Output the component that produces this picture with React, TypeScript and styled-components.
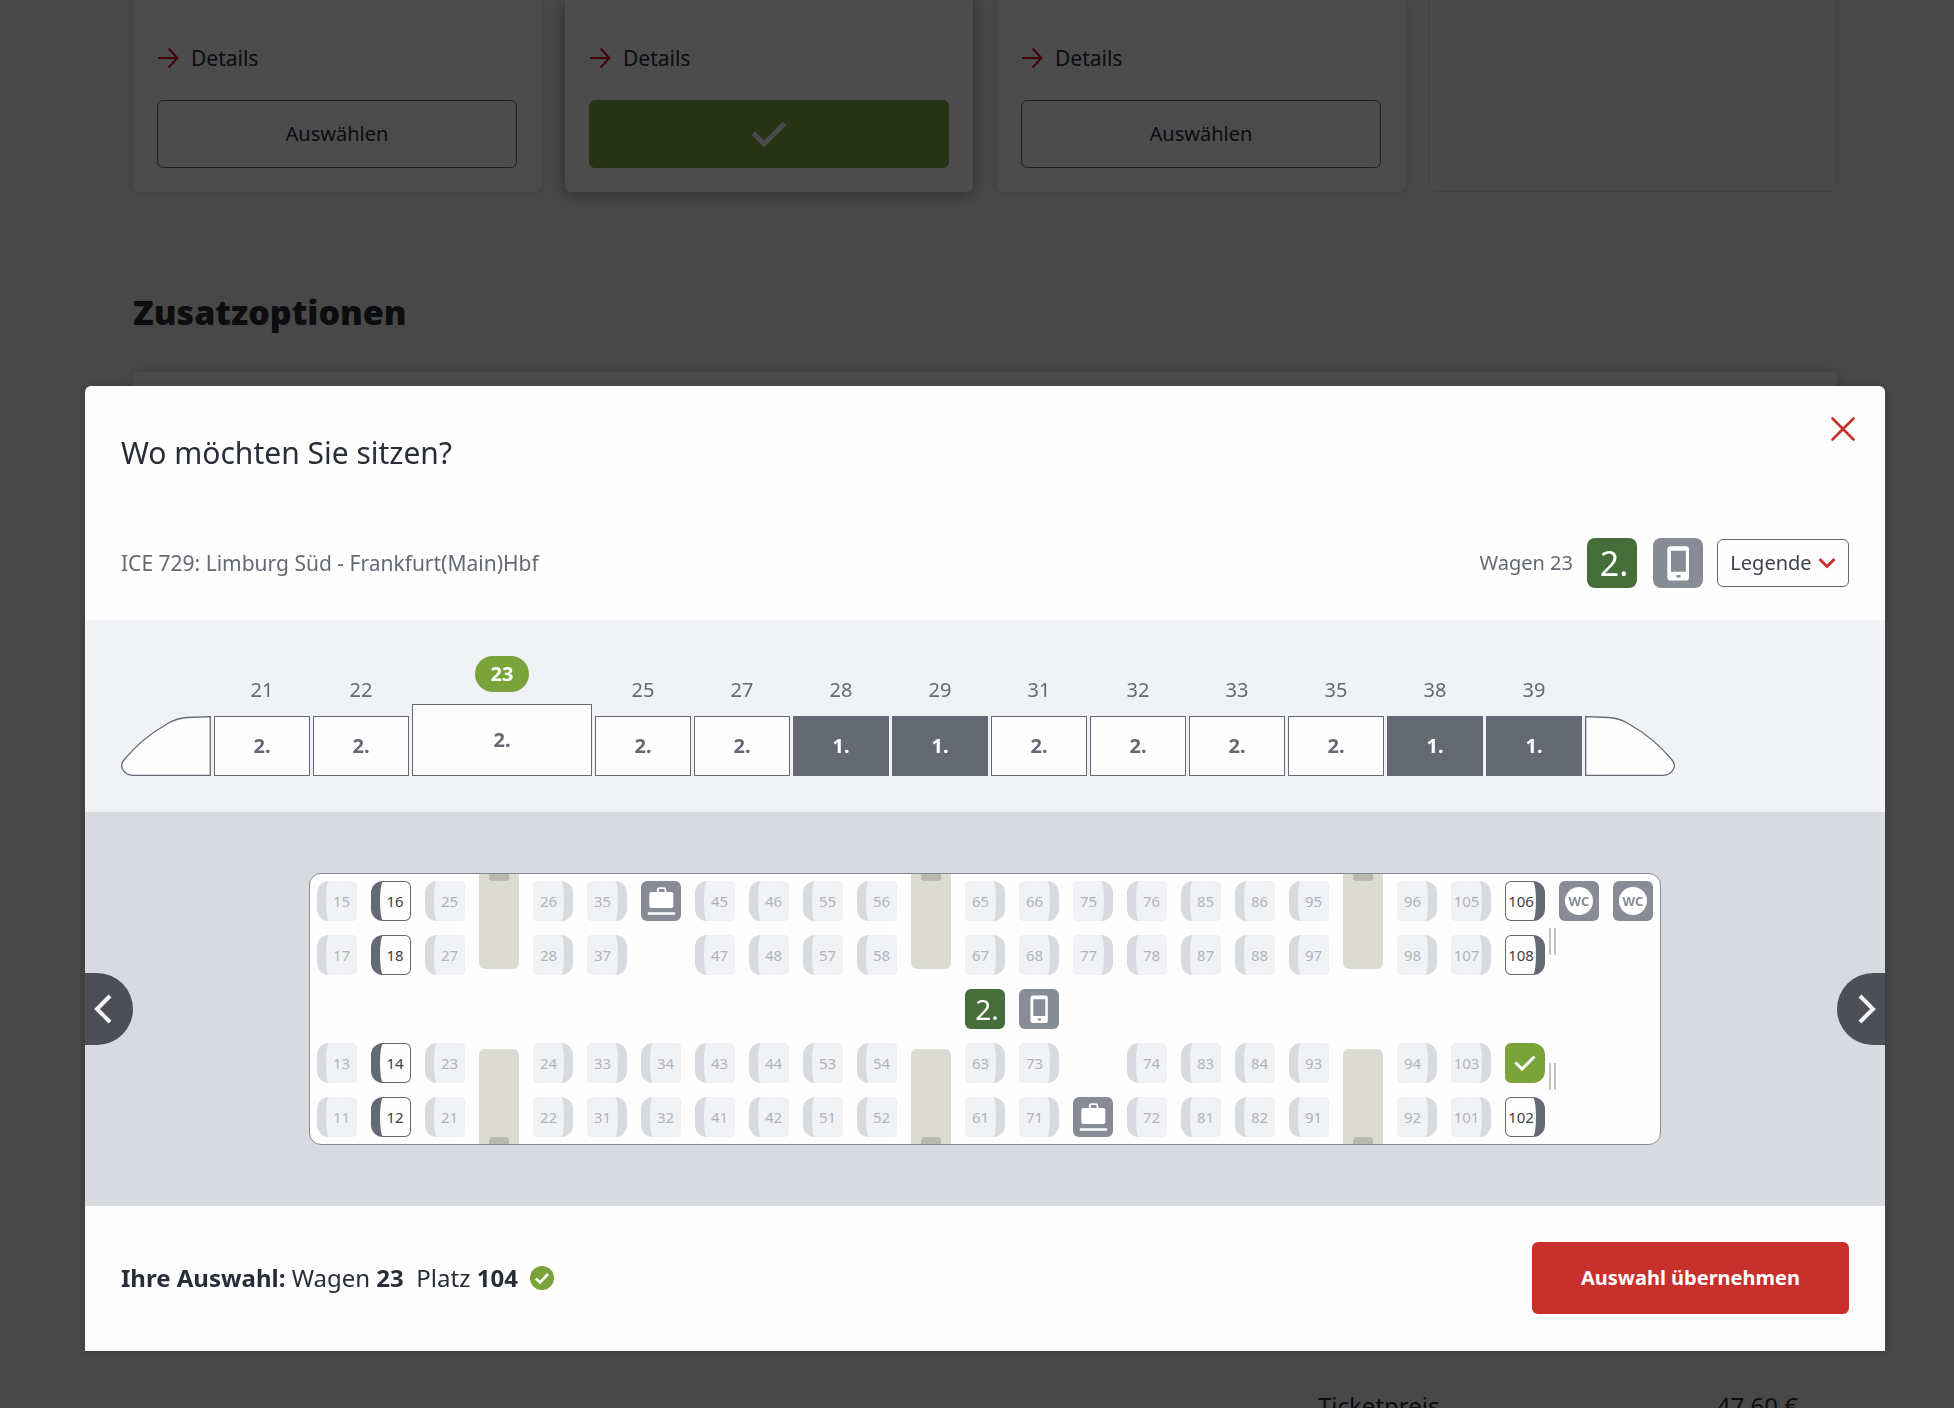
import React, { useState } from "react";
import styled, { createGlobalStyle, css } from "styled-components";

const color = {
  ink: "#282d37",
  text: "#3c414b",
  muted: "#646973",
  icon: "#878c96",
  faint: "#afb4bb",
  line: "#d7dadf",
  light: "#f0f2f5",
  surface: "#fefefe",
  red: "#c8302c",
  green: "#7aa43a",
  darkGreen: "#466e3a",
  nav: "#4c4f58",
  table: "#dbdbd4",
  tableEdge: "#b8b8b0",
};

const Global = createGlobalStyle`
  *, *::before, *::after { box-sizing: border-box; }
  body {
    margin: 0;
    background: #f0f0f0;
    color: ${color.ink};
    font-family: "Noto Sans", "Open Sans", sans-serif;
    font-size: 20px;
    line-height: 28px;
  }
  button { font: inherit; color: inherit; margin: 0; padding: 0; border: 0; background: none; cursor: pointer; }
  h1, h2, p { margin: 0; }
  svg { display: block; flex: none; }
`;

/* ---------- page behind the dialog ---------- */

const Page = styled.main`
  height: 100vh;
  overflow: hidden;
  padding: 0 117px 0 133px;
`;

const Offers = styled.section`
  display: grid;
  grid-template-columns: repeat(4, 1fr);
  gap: 24px;
`;

const OfferCard = styled.article<{ $active?: boolean; $empty?: boolean }>`
  display: flex;
  flex-direction: column;
  gap: 24px;
  padding: 40px 24px 24px;
  background: #fff;
  border-radius: 0 0 6px 6px;
  box-shadow: ${(p) => (p.$active ? "0 2px 16px rgba(0,0,0,.4)" : "0 2px 10px rgba(0,0,0,.1)")};
  ${(p) =>
    p.$empty &&
    css`
      background: #f6f6f6;
      border: 1px solid #e2e2e2;
      border-top: 0;
      box-shadow: none;
    `}
`;

const DetailsLink = styled.a`
  display: flex;
  align-items: center;
  gap: 12px;
  font-size: 21px;
  line-height: 36px;
  color: ${color.ink};
  text-decoration: none;
`;

const OfferButton = styled.button<{ $active?: boolean }>`
  display: flex;
  align-items: center;
  justify-content: center;
  height: 68px;
  border-radius: 6px;
  border: 1px solid ${color.muted};
  ${(p) =>
    p.$active &&
    css`
      border-color: #85a743;
      background: #85a743;
    `}
`;

const SectionTitle = styled.h2`
  margin: 96px 0 36px;
  font-size: 34px;
  font-weight: 900;
  line-height: 48px;
`;

const OptionsPanel = styled.section`
  height: 940px;
  background: #fff;
  border-radius: 6px;
  box-shadow: 0 2px 16px rgba(0, 0, 0, 0.2);
`;

const PriceRow = styled.dl`
  display: flex;
  justify-content: space-between;
  width: 480px;
  margin: 76px 39px 0 auto;
  font-size: 24px;
  line-height: 36px;
  dd { margin: 0; }
`;

/* ---------- dialog ---------- */

const Overlay = styled.div`
  position: fixed;
  inset: 0;
  padding: 386px 69px 0 85px;
  background: rgba(0, 0, 0, 0.7);
`;

const Dialog = styled.section`
  overflow: hidden;
  background: ${color.surface};
  border-bottom: 1px solid ${color.light};
  border-radius: 6px 6px 0 0;
  box-shadow: 0 0 12px rgba(0, 0, 0, 0.2);
`;

const DialogTop = styled.header`
  display: flex;
  justify-content: space-between;
  align-items: flex-start;
  padding: 19px 18px 0 36px;
`;

const DialogTitle = styled.h1`
  margin-top: 28px;
  font-size: 30px;
  font-weight: 400;
  line-height: 40px;
`;

const CloseButton = styled.button`
  display: grid;
  place-items: center;
  width: 48px;
  height: 48px;
`;

const RouteBar = styled.div`
  display: flex;
  justify-content: space-between;
  align-items: center;
  padding: 65px 36px 32px;
  color: ${color.muted};
`;

const Route = styled.p`
  font-size: 21px;
`;

const CoachInfo = styled.div`
  display: flex;
  align-items: center;
  gap: 14px;
`;

const IconPair = styled.div`
  display: flex;
  gap: 16px;
`;

const IconTile = styled.span<{ $size: number; $green?: boolean }>`
  display: grid;
  place-items: center;
  width: ${(p) => p.$size}px;
  height: ${(p) => p.$size}px;
  padding-left: ${(p) => (p.$green ? 4 : 0)}px;
  border-radius: ${(p) => (p.$size > 40 ? 8 : 6)}px;
  background: ${(p) => (p.$green ? color.darkGreen : color.icon)};
  color: #fff;
  font-size: ${(p) => (p.$size > 40 ? 34 : 28)}px;
  line-height: ${(p) => p.$size}px;
`;

const LegendButton = styled.button`
  display: flex;
  align-items: center;
  justify-content: center;
  gap: 6px;
  width: 132px;
  height: 48px;
  border: 1px solid ${color.muted};
  border-radius: 6px;
  color: ${color.text};
`;

/* ---------- train overview ---------- */

const Train = styled.nav`
  display: flex;
  align-items: flex-end;
  gap: 3px;
  padding: 36px;
  background: ${color.light};
  color: ${color.muted};
`;

const Coach = styled.button<{ $current: boolean }>`
  display: flex;
  flex-direction: column;
  align-items: center;
  gap: 12px;
  width: ${(p) => (p.$current ? 180 : 96)}px;
`;

const CoachNumber = styled.span<{ $current: boolean }>`
  ${(p) =>
    p.$current &&
    css`
      padding: 4px 16px;
      border-radius: 18px;
      background: ${color.green};
      color: #fff;
      font-weight: 700;
    `}
`;

const CoachBody = styled.span<{ $first: boolean; $current: boolean }>`
  display: grid;
  place-items: center;
  width: 100%;
  height: ${(p) => (p.$current ? 72 : 60)}px;
  border: 1px solid ${color.muted};
  background: ${(p) => (p.$first ? color.muted : color.surface)};
  color: ${(p) => (p.$first ? "#fff" : color.muted)};
  font-weight: 700;
`;

/* ---------- seat map ---------- */

const Stage = styled.div`
  display: flex;
  justify-content: space-between;
  align-items: center;
  padding: 61px 0;
  background: ${color.line};
`;

const StepButton = styled.button<{ $side: "left" | "right" }>`
  display: grid;
  place-items: center;
  width: 48px;
  height: 72px;
  background: ${color.nav};
  ${(p) =>
    p.$side === "left"
      ? css`
          padding-right: 12px;
          border-radius: 0 36px 36px 0;
        `
      : css`
          padding-left: 12px;
          border-radius: 36px 0 0 36px;
        `}
`;

const SeatMap = styled.div`
  display: grid;
  grid-template-columns: repeat(25, 54px);
  grid-template-rows: repeat(5, 54px);
  place-items: center;
  border: 1px solid ${color.icon};
  border-radius: 12px;
  background: ${color.surface};
`;

const Cell = styled.div<{ $col: number; $row: number }>`
  grid-column: ${(p) => p.$col};
  grid-row: ${(p) => p.$row};
`;

const SeatButton = styled.button<{ $back: Side; $free: boolean }>`
  display: flex;
  width: 40px;
  height: 40px;
  overflow: hidden;
  padding: ${(p) => (p.$free ? 1 : 0)}px;
  ${(p) => (p.$back === "left" ? "padding-left: 9px;" : "padding-right: 9px;")}
  border-radius: ${(p) => (p.$back === "left" ? "12px 6px 6px 12px" : "6px 12px 12px 6px")};
  background: ${(p) => (p.$free ? color.muted : color.line)};
  color: ${(p) => (p.$free ? color.text : color.faint)};
  font-size: 15px;
`;

const Cushion = styled.span<{ $back: Side; $free: boolean }>`
  display: grid;
  place-items: center;
  flex: 1;
  height: 100%;
  border-radius: ${(p) => (p.$back === "left" ? "3px 5px 5px 3px / 50% 5px 5px 50%" : "5px 3px 3px 5px / 5px 50% 50% 5px")};
  background: ${(p) => (p.$free ? color.surface : color.light)};
  ${(p) =>
    !p.$free &&
    (p.$back === "left"
      ? "border-top-right-radius: 0; border-bottom-right-radius: 0;"
      : "border-top-left-radius: 0; border-bottom-left-radius: 0;")}
`;

const ChosenSeat = styled.button`
  display: grid;
  place-items: center;
  width: 40px;
  height: 40px;
  border-radius: 6px 12px 12px 6px;
  background: ${color.green};
`;

const Table = styled.div<{ $col: number; $end?: boolean }>`
  grid-column: ${(p) => p.$col};
  grid-row: ${(p) => (p.$end ? "4 / 6" : "1 / 3")};
  align-self: ${(p) => (p.$end ? "end" : "start")};
  display: flex;
  justify-content: center;
  align-items: ${(p) => (p.$end ? "flex-end" : "flex-start")};
  width: 40px;
  height: 95px;
  border-radius: ${(p) => (p.$end ? "6px 6px 0 0" : "0 0 6px 6px")};
  background: ${color.table};
  &::before {
    content: "";
    width: 20px;
    height: 7px;
    border-radius: ${(p) => (p.$end ? "3px 3px 0 0" : "0 0 3px 3px")};
    background: ${color.tableEdge};
  }
`;

const Door = styled.div<{ $row: number; $end?: boolean }>`
  grid-column: 24;
  grid-row: ${(p) => p.$row};
  place-self: ${(p) => (p.$end ? "end start" : "start")};
  width: 7px;
  height: 27px;
  margin-left: -3px;
  border: solid #c4c4bc;
  border-width: 0 2px;
`;

const WcLabel = styled.span`
  display: grid;
  place-items: center;
  width: 28px;
  height: 28px;
  border-radius: 50%;
  background: #fff;
  color: ${color.icon};
  font-size: 13px;
  font-weight: 700;
  line-height: 28px;
`;

/* ---------- footer ---------- */

const DialogFooter = styled.footer`
  display: flex;
  justify-content: space-between;
  align-items: center;
  padding: 36px;
`;

const Summary = styled.p`
  display: flex;
  align-items: center;
  gap: 12px;
  font-size: 24px;
`;

const SubmitButton = styled.button`
  height: 72px;
  padding: 0 49px;
  border-radius: 6px;
  background: ${color.red};
  color: #fff;
  font-weight: 700;
`;

/* ---------- drawings ---------- */

const ArrowIcon = () => (
  <svg width="22" height="22" viewBox="0 0 22 22" fill="none" stroke="#e0101c" strokeWidth="2" aria-hidden>
    <path d="M1 11H20M11.500 1.500 20.500 11 11.500 20.500" />
  </svg>
);

const CloseIcon = () => (
  <svg width="24" height="24" viewBox="0 0 24 24" fill="none" stroke={color.red} strokeWidth="2.600" strokeLinecap="round" aria-hidden>
    <path d="M1.500 1.500l21 21M22.500 1.500l-21 21" />
  </svg>
);

const ChevronDown = () => (
  <svg width="18" height="12" viewBox="0 0 18 12" fill="none" stroke={color.red} strokeWidth="3" aria-hidden>
    <path d="M1.500 2 9 9.500 16.500 2" />
  </svg>
);

const StepIcon = ({ side }: { side: Side }) => (
  <svg width="18" height="30" viewBox="0 0 18 30" fill="none" stroke="#f5f5f7" strokeWidth="4" aria-hidden>
    <path d={side === "left" ? "M16 2 3 15l13 13" : "M2 2l13 13L2 28"} />
  </svg>
);

const CheckIcon = ({ width, stroke = "#fff" }: { width: number; stroke?: string }) => (
  <svg width={width} viewBox="0 0 22 16" fill="none" stroke={stroke} strokeWidth="3" aria-hidden>
    <path d="M1.500 7.500 8 14 20.500 1.500" />
  </svg>
);

const PhoneIcon = ({ size }: { size: number }) => (
  <svg width={size} height={size} viewBox="0 0 40 40" aria-hidden>
    <rect x="11.500" y="6.500" width="17.300" height="27.500" rx="2.500" fill="#fff" />
    <path d="M14.300 10.200h12V27h-12zM18.800 29.500h3.200v2h-3.200z" fill={color.icon} />
  </svg>
);

const LuggageIcon = () => (
  <svg width="40" height="40" viewBox="0 0 40 40" aria-hidden>
    <rect x="16.800" y="7.200" width="7.600" height="6" rx="1.500" fill="none" stroke="#fff" strokeWidth="1.800" />
    <rect x="8.300" y="11" width="24" height="16" rx="2" fill="#fff" />
    <rect x="6.700" y="31.300" width="27.600" height="2.400" rx="1" fill="#fff" />
  </svg>
);

const Nose = ({ flip }: { flip?: boolean }) => (
  <svg width="90" height="60" viewBox="0 0 90 60" aria-hidden>
    <path
      transform={flip ? "matrix(-1 0 0 1 90 0)" : undefined}
      d="M89.300.700 66 1.500C58 2 53 3.500 46 8 30 17 16 28 3 44 .500 47 0 50 1.500 53 3.500 57 7 59.300 12 59.300H89.300Z"
      fill={color.surface}
      stroke={color.muted}
      strokeWidth="1.300"
    />
  </svg>
);

const DoneBadge = () => (
  <svg width="24" height="24" viewBox="0 0 24 24" aria-hidden>
    <circle cx="12" cy="12" r="12" fill={color.green} />
    <path d="M5.800 12.500 10 16.500 18 8" fill="none" stroke="#fff" strokeWidth="2.600" />
  </svg>
);

/* ---------- data ---------- */

type Side = "left" | "right";

const coaches = [
  [21, 2], [22, 2], [23, 2], [25, 2], [27, 2], [28, 1], [29, 1],
  [31, 2], [32, 2], [33, 2], [35, 2], [38, 1], [39, 1],
];

const seatColumns: { col: number; back: Side; seats: (number | null)[] }[] = [
  { col: 1, back: "left", seats: [15, 17, 13, 11] },
  { col: 2, back: "left", seats: [16, 18, 14, 12] },
  { col: 3, back: "left", seats: [25, 27, 23, 21] },
  { col: 5, back: "right", seats: [26, 28, 24, 22] },
  { col: 6, back: "right", seats: [35, 37, 33, 31] },
  { col: 7, back: "left", seats: [null, null, 34, 32] },
  { col: 8, back: "left", seats: [45, 47, 43, 41] },
  { col: 9, back: "left", seats: [46, 48, 44, 42] },
  { col: 10, back: "left", seats: [55, 57, 53, 51] },
  { col: 11, back: "left", seats: [56, 58, 54, 52] },
  { col: 13, back: "right", seats: [65, 67, 63, 61] },
  { col: 14, back: "right", seats: [66, 68, 73, 71] },
  { col: 15, back: "right", seats: [75, 77, null, null] },
  { col: 16, back: "left", seats: [76, 78, 74, 72] },
  { col: 17, back: "left", seats: [85, 87, 83, 81] },
  { col: 18, back: "left", seats: [86, 88, 84, 82] },
  { col: 19, back: "left", seats: [95, 97, 93, 91] },
  { col: 21, back: "right", seats: [96, 98, 94, 92] },
  { col: 22, back: "right", seats: [105, 107, 103, 101] },
  { col: 23, back: "right", seats: [106, 108, 104, 102] },
];

const seatRows = [1, 2, 4, 5];
const freeSeats = new Set([12, 14, 16, 18, 102, 104, 106, 108]);
const tableColumns = [4, 12, 20];

function Seat({ number, back, chosen, onChoose }: { number: number; back: Side; chosen: boolean; onChoose: () => void }) {
  if (chosen) {
    return (
      <ChosenSeat type="button" aria-label={`Platz ${number}`} aria-pressed>
        <CheckIcon width={22} />
      </ChosenSeat>
    );
  }
  const free = freeSeats.has(number);
  return (
    <SeatButton type="button" $back={back} $free={free} disabled={!free} onClick={onChoose}>
      <Cushion $back={back} $free={free}>{number}</Cushion>
    </SeatButton>
  );
}

export default function App() {
  const [seat, setSeat] = useState(104);

  return (
    <>
      <Global />
      <Page>
        <Offers>
          {[false, true, false].map((active, i) => (
            <OfferCard key={i} $active={active}>
              <DetailsLink href="#details">
                <ArrowIcon />
                Details
              </DetailsLink>
              <OfferButton type="button" $active={active} aria-label={active ? "Ausgewählt" : undefined}>
                {active ? <CheckIcon width={36} /> : "Auswählen"}
              </OfferButton>
            </OfferCard>
          ))}
          <OfferCard $empty />
        </Offers>
        <SectionTitle>Zusatzoptionen</SectionTitle>
        <OptionsPanel />
        <PriceRow>
          <dt>Ticketpreis</dt>
          <dd>47,60 €</dd>
        </PriceRow>
      </Page>

      <Overlay>
        <Dialog role="dialog" aria-modal aria-labelledby="seat-title">
          <DialogTop>
            <DialogTitle id="seat-title">Wo möchten Sie sitzen?</DialogTitle>
            <CloseButton type="button" aria-label="Schließen">
              <CloseIcon />
            </CloseButton>
          </DialogTop>
          <RouteBar>
            <Route>ICE 729: Limburg Süd - Frankfurt(Main)Hbf</Route>
            <CoachInfo>
              <span>Wagen 23</span>
              <IconPair>
                <IconTile $size={50} $green>2.</IconTile>
                <IconTile $size={50}><PhoneIcon size={50} /></IconTile>
              </IconPair>
              <LegendButton type="button">
                Legende
                <ChevronDown />
              </LegendButton>
            </CoachInfo>
          </RouteBar>

          <Train>
            <Nose />
            {coaches.map(([number, cls]) => (
              <Coach key={number} type="button" $current={number === 23}>
                <CoachNumber $current={number === 23}>{number}</CoachNumber>
                <CoachBody $first={cls === 1} $current={number === 23}>{cls}.</CoachBody>
              </Coach>
            ))}
            <Nose flip />
          </Train>

          <Stage>
            <StepButton type="button" $side="left" aria-label="Vorheriger Wagen">
              <StepIcon side="left" />
            </StepButton>
            <SeatMap>
              {seatColumns.map(({ col, back, seats }) =>
                seats.map((number, i) =>
                  number === null ? null : (
                    <Cell key={number} $col={col} $row={seatRows[i]}>
                      <Seat number={number} back={back} chosen={number === seat} onChoose={() => setSeat(number)} />
                    </Cell>
                  ),
                ),
              )}
              {tableColumns.map((col) => (
                <React.Fragment key={col}>
                  <Table $col={col} />
                  <Table $col={col} $end />
                </React.Fragment>
              ))}
              <Cell $col={7} $row={1}><IconTile $size={40}><LuggageIcon /></IconTile></Cell>
              <Cell $col={15} $row={5}><IconTile $size={40}><LuggageIcon /></IconTile></Cell>
              <Cell $col={13} $row={3}><IconTile $size={40} $green>2.</IconTile></Cell>
              <Cell $col={14} $row={3}><IconTile $size={40}><PhoneIcon size={40} /></IconTile></Cell>
              <Cell $col={24} $row={1}><IconTile $size={40}><WcLabel>WC</WcLabel></IconTile></Cell>
              <Cell $col={25} $row={1}><IconTile $size={40}><WcLabel>WC</WcLabel></IconTile></Cell>
              <Door $row={2} />
              <Door $row={4} $end />
            </SeatMap>
            <StepButton type="button" $side="right" aria-label="Nächster Wagen">
              <StepIcon side="right" />
            </StepButton>
          </Stage>

          <DialogFooter>
            <Summary>
              <span>
                <b>Ihre Auswahl:</b> Wagen <b>23</b>&nbsp; Platz <b>{seat}</b>
              </span>
              <DoneBadge />
            </Summary>
            <SubmitButton type="button">Auswahl übernehmen</SubmitButton>
          </DialogFooter>
        </Dialog>
      </Overlay>
    </>
  );
}
